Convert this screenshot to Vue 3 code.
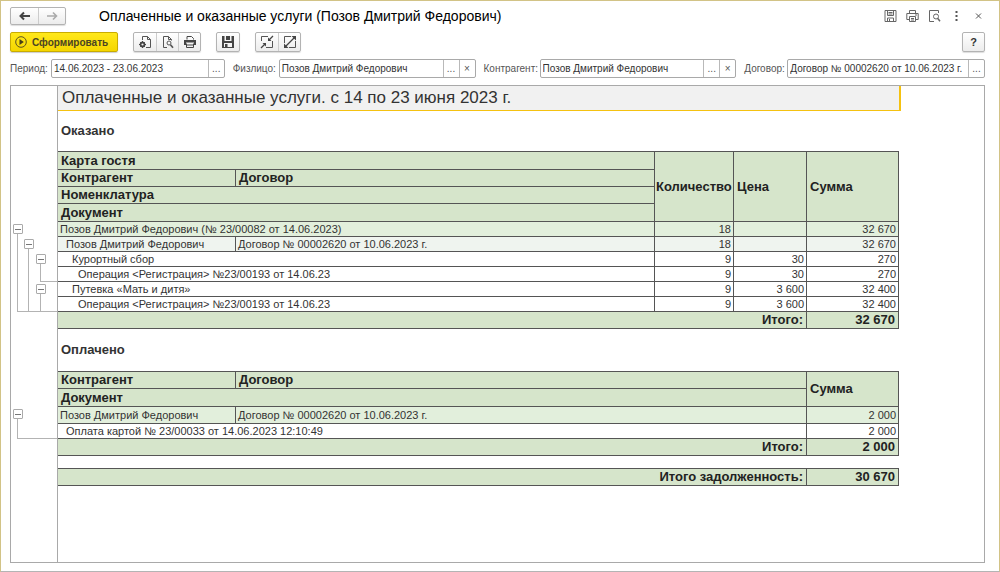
<script setup>
const filters = [
  { id: 'period', label: 'Период:', value: '14.06.2023 - 23.06.2023', clear: false },
  { id: 'person', label: 'Физлицо:', value: 'Позов Дмитрий Федорович', clear: true },
  { id: 'partner', label: 'Контрагент:', value: 'Позов Дмитрий Федорович', clear: true },
  { id: 'contract', label: 'Договор:', value: 'Договор № 00002620 от 10.06.2023 г.', clear: false },
]
const operations = [
  { name: 'Курортный сбор', level: 2, qty: '9', price: '30', sum: '270' },
  { name: 'Операция <Регистрация> №23/00193 от 14.06.23', level: 3, qty: '9', price: '30', sum: '270' },
  { name: 'Путевка «Мать и дитя»', level: 2, qty: '9', price: '3 600', sum: '32 400' },
  { name: 'Операция <Регистрация> №23/00193 от 14.06.23', level: 3, qty: '9', price: '3 600', sum: '32 400' },
]
const groups = ['g1', 'g2', 'g3', 'g4']
</script>

<template>
  <main class="window">
    <header class="titlebar">
      <div class="group nav">
        <button type="button" aria-label="Назад">
          <svg width="12" height="10" viewBox="0 0 12 10"><path d="M11 5H2M5 1.5L1.5 5L5 8.5" fill="none" stroke="#444" stroke-width="2" /></svg>
        </button>
        <button type="button" aria-label="Вперед">
          <svg width="12" height="10" viewBox="0 0 12 10"><path d="M1 5H10M7 1.5L10.500 5L7 8.500" fill="none" stroke="#aaa" stroke-width="1.600" /></svg>
        </button>
      </div>
      <h1>Оплаченные и оказанные услуги (Позов Дмитрий Федорович)</h1>
      <div class="window-actions">
        <button type="button" aria-label="Сохранить">
          <svg width="13" height="12" viewBox="0 0 13 12" fill="none" stroke="#666"><path d="M1 .5H12V11.500H1Z" /><path d="M3.500 1V5.500H9.500V1M4.500 2.500H8.500M4.500 4H8.500" /><path d="M3.500 11.500V8H9.500V11.500M5.500 9V11" /></svg>
        </button>
        <button type="button" aria-label="Печать">
          <svg width="13" height="12" viewBox="0 0 13 12" fill="none" stroke="#666"><path d="M3.500 3.500V.5H9.500V3.500M3 9.500H.8V3.500H12.200V9.500H10" /><path d="M3.500 6.500H9.500V11.500H3.500ZM5 8.500H8M5 10H8M9 5H11" /></svg>
        </button>
        <button type="button" aria-label="Просмотр">
          <svg width="13" height="12" viewBox="0 0 13 12" fill="none" stroke="#666"><path d="M6 11.500H1.500V.5H10.500V3" /><circle cx="8" cy="6.500" r="2.500" /><path d="M9.800 8.500L12 11.200" stroke-width="1.500" /></svg>
        </button>
        <button type="button" aria-label="Меню">
          <svg width="13" height="12" viewBox="0 0 13 12" fill="#555"><rect x="5.500" y="1" width="2" height="2" /><rect x="5.500" y="5" width="2" height="2" /><rect x="5.500" y="9" width="2" height="2" /></svg>
        </button>
        <button type="button" aria-label="Закрыть">
          <svg width="13" height="12" viewBox="0 0 13 12" fill="none" stroke="#555"><path d="M4 3.500L9 8.500M9 3.500L4 8.500" /></svg>
        </button>
      </div>
    </header>

    <div class="toolbar">
      <button type="button" class="primary">
        <svg width="12" height="12" viewBox="0 0 12 12"><circle cx="6" cy="6" r="5.300" fill="none" stroke="#5c5320" /><path d="M4.500 3L8.800 6L4.500 9Z" fill="#443d18" /></svg>
        <span>Сформировать</span>
      </button>
      <div class="group">
        <button type="button" aria-label="Настройки">
          <svg width="14" height="14" viewBox="0 0 14 14" fill="none" stroke="#555"><path d="M4.500 5V1.500H9.500L12.500 4.500V12.500H8M9.500 1.500V4.500H12.500" /><circle cx="4.500" cy="9.500" r="2" stroke="#444" stroke-width="1.800" /><path d="M4.500 6V7M4.500 12V13M1 9.500H2M7 9.500H8M2 7L2.800 7.800M7 12L6.200 11.200M7 7L6.200 7.800M2 12L2.800 11.200" stroke="#444" /></svg>
        </button>
        <button type="button" aria-label="Предварительный просмотр">
          <svg width="14" height="14" viewBox="0 0 14 14" fill="none" stroke="#555"><path d="M6 12.500H2.500V1.500H7.500L10.500 4.500V5.500M7.500 1.500V4.500H10.500" /><circle cx="8" cy="8" r="2" /><path d="M9.500 9.800L12 12.800" stroke-width="1.700" /></svg>
        </button>
        <button type="button" aria-label="Печать отчета">
          <svg width="14" height="14" viewBox="0 0 14 14" fill="none" stroke="#444"><path d="M4 4.500V1.500H8.500L10.500 3.500V4.500" /><path d="M1 5H13V10H11V7.500H3V10H1Z" fill="#444" stroke="none" /><path d="M3.500 8.500V12.500H10.500V8.500M3 10H11" /></svg>
        </button>
      </div>
      <div class="group">
        <button type="button" aria-label="Записать">
          <svg width="14" height="14" viewBox="0 0 14 14"><path d="M1 1H13V13H1Z" fill="#444" /><path d="M3.500 1H10.500V6H3.500ZM3 8H11V12H3Z" fill="#f4f4f4" /><path d="M5 1H9V5H5ZM4 9H6.500V12H4Z" fill="#444" /></svg>
        </button>
      </div>
      <div class="group">
        <button type="button" aria-label="Свернуть группы">
          <svg width="14" height="14" viewBox="0 0 14 14" fill="none" stroke="#555"><path d="M1.500 6V1.500H8M12.500 6V12.500H6" /><path d="M13 1L9 5M1 13L5 9" stroke="#444" stroke-width="1.300" /><path d="M8 2.500V6H11.500ZM6 11.500V8H2.500Z" fill="#444" stroke="none" /></svg>
        </button>
        <button type="button" aria-label="Развернуть группы">
          <svg width="14" height="14" viewBox="0 0 14 14" fill="none" stroke="#555"><path d="M1.500 8V1.500H8M12.500 6V12.500H6" /><path d="M3 11L11 3" stroke="#444" stroke-width="1.300" /><path d="M8.500 1H13V5.500ZM1 8.500V13H5.500Z" fill="#444" stroke="none" /></svg>
        </button>
      </div>
      <button type="button" class="help">?</button>
    </div>

    <form class="filters" @submit.prevent>
      <template v-for="f in filters" :key="f.id">
        <label :for="f.id">{{ f.label }}</label>
        <div class="field">
          <input :id="f.id" type="text" :value="f.value" />
          <button type="button" aria-label="Выбрать">...</button>
          <button v-if="f.clear" type="button" aria-label="Очистить">×</button>
        </div>
      </template>
    </form>

    <div class="sheet">
      <div class="band">
        <div class="gutter"></div>
        <h2 class="report-title">Оплаченные и оказанные услуги. с 14 по 23 июня 2023 г.</h2>
      </div>

      <div class="band">
        <div class="gutter"></div>
        <h3>Оказано</h3>
      </div>

      <div class="band">
        <div class="gutter tree services">
          <div v-for="g in groups" :key="g" class="node" :class="g">
            <button type="button" aria-label="Свернуть группу"></button>
            <span class="stem"></span>
          </div>
        </div>
        <table>
          <colgroup><col class="c1" /><col class="c2" /><col class="c3" /><col class="c4" /><col class="c5" /></colgroup>
          <thead>
            <tr class="tall">
              <th colspan="2">Карта гостя</th>
              <th rowspan="4" class="snug">Количество</th>
              <th rowspan="4">Цена</th>
              <th rowspan="4">Сумма</th>
            </tr>
            <tr><th>Контрагент</th><th>Договор</th></tr>
            <tr><th colspan="2">Номенклатура</th></tr>
            <tr class="tall"><th colspan="2">Документ</th></tr>
          </thead>
          <tbody>
            <tr class="level-a">
              <td colspan="2">Позов Дмитрий Федорович (№ 23/00082 от 14.06.2023)</td>
              <td class="num">18</td><td></td><td class="num">32 670</td>
            </tr>
            <tr class="level-b">
              <td class="indent-1">Позов Дмитрий Федорович</td>
              <td>Договор № 00002620 от 10.06.2023 г.</td>
              <td class="num">18</td><td></td><td class="num">32 670</td>
            </tr>
            <tr v-for="(o, i) in operations" :key="i">
              <td colspan="2" :class="'indent-' + o.level">{{ o.name }}</td>
              <td class="num">{{ o.qty }}</td><td class="num">{{ o.price }}</td><td class="num">{{ o.sum }}</td>
            </tr>
          </tbody>
          <tfoot>
            <tr><th colspan="4" class="num">Итого:</th><td class="num">32 670</td></tr>
          </tfoot>
        </table>
      </div>

      <div class="band">
        <div class="gutter"></div>
        <h3 class="second">Оплачено</h3>
      </div>

      <div class="band">
        <div class="gutter tree payments">
          <div class="node">
            <button type="button" aria-label="Свернуть группу"></button>
            <span class="stem"></span>
          </div>
        </div>
        <table>
          <colgroup><col class="c1" /><col class="c2" /><col class="c3" /><col class="c4" /><col class="c5" /></colgroup>
          <thead>
            <tr><th>Контрагент</th><th colspan="3">Договор</th><th rowspan="2">Сумма</th></tr>
            <tr class="tall"><th colspan="4">Документ</th></tr>
          </thead>
          <tbody>
            <tr class="level-a roomy">
              <td>Позов Дмитрий Федорович</td>
              <td colspan="3">Договор № 00002620 от 10.06.2023 г.</td>
              <td class="num">2 000</td>
            </tr>
            <tr>
              <td colspan="4" class="indent-1">Оплата картой № 23/00033 от 14.06.2023 12:10:49</td>
              <td class="num">2 000</td>
            </tr>
          </tbody>
          <tfoot>
            <tr><th colspan="4" class="num">Итого:</th><td class="num">2 000</td></tr>
          </tfoot>
        </table>
      </div>

      <div class="band">
        <div class="gutter"></div>
        <table class="debt">
          <colgroup><col class="c1" /><col class="c2" /><col class="c3" /><col class="c4" /><col class="c5" /></colgroup>
          <tfoot>
            <tr><th colspan="4" class="num">Итого задолженность:</th><td class="num">30 670</td></tr>
          </tfoot>
        </table>
      </div>

      <div class="band rest"><div class="gutter"></div></div>
    </div>
  </main>
</template>

<style>
body {
  margin: 0;
  background: #fff;
}
</style>

<style scoped>
* {
  box-sizing: border-box;
}
.window {
  display: flex;
  flex-direction: column;
  min-height: 100vh;
  padding: 6px 14px 8px 9px;
  border: 1px solid #d2c386;
  border-bottom-color: #b4b4b4;
  font-family: "Liberation Sans", Arial, sans-serif;
  font-size: 11px;
  color: #333;
}
button {
  padding: 0;
  margin: 0;
  border: 0;
  background: none;
  font: inherit;
  color: inherit;
}
h1, h2, h3 {
  margin: 0;
}
svg {
  display: block;
}
.titlebar {
  display: flex;
  align-items: center;
  height: 18px;
}
.titlebar h1 {
  margin-left: 33px;
  font-size: 14px;
  font-weight: 400;
  line-height: 18px;
  color: #000;
  white-space: nowrap;
}
.window-actions {
  display: flex;
  gap: 9px;
  margin-left: auto;
}
.group {
  display: flex;
  border: 1px solid #b3b3b3;
  border-radius: 2px;
  background: linear-gradient(#fff, #ececec);
  box-shadow: 0 1px 1px #ddd;
}
.group button {
  display: flex;
  align-items: center;
  justify-content: center;
  width: 22px;
}
.group button + button {
  border-left: 1px solid #ccc;
}
.nav {
  height: 18px;
}
.group.nav button {
  width: 27px;
}
.toolbar {
  display: flex;
  gap: 15px;
  height: 20px;
  margin-top: 7px;
}
.primary {
  display: flex;
  align-items: center;
  gap: 5px;
  padding: 0 9px 0 4px;
  border: 1px solid #c9ac00;
  border-radius: 2px;
  background: linear-gradient(#ffe81a, #f5d600);
  box-shadow: 0 1px 1px #ccc;
  font-size: 10px;
  font-weight: 700;
  color: #4a4423;
}
.help {
  width: 23px;
  margin-left: auto;
  border: 1px solid #b3b3b3;
  border-radius: 2px;
  background: linear-gradient(#fff, #ececec);
  box-shadow: 0 1px 1px #ddd;
  font-weight: 700;
}
.filters {
  display: grid;
  grid-template-columns: 41px 174fr 54px 197fr 64px 197fr 51px 198fr;
  height: 19px;
  margin-top: 7px;
  font-size: 10px;
}
.filters label {
  padding-left: 8px;
  line-height: 19px;
  color: #555;
  white-space: nowrap;
}
.filters label:first-child {
  padding-left: 0;
}
.field {
  display: flex;
  min-width: 0;
  border: 1px solid #a9a9a9;
  border-radius: 2px;
}
.field input {
  flex: 1;
  min-width: 0;
  padding: 0 0 0 2px;
  border: 0;
  outline: 0;
  background: none;
  font: inherit;
  color: #333;
}
.field button {
  width: 16px;
  border-left: 1px solid #b9b9b9;
  color: #555;
}
.sheet {
  display: flex;
  flex: 1;
  flex-direction: column;
  margin-top: 7px;
  border: 1px solid #a9a9a9;
}
.band {
  display: flex;
}
.rest {
  flex: 1;
}
.gutter {
  flex: none;
  width: 47px;
  border-right: 1px solid #a9a9a9;
}
.report-title {
  width: 843px;
  height: 25px;
  padding-left: 4px;
  border: solid #f5c211;
  border-width: 0 2px 1px 0;
  background: #f1f1f1;
  font-size: 17px;
  font-weight: 400;
  line-height: 23px;
}
h3 {
  padding-left: 3px;
  font-size: 13px;
  line-height: 40px;
}
.second {
  line-height: 42px;
}
table {
  width: 841px;
  table-layout: fixed;
  border-spacing: 0;
  border-top: 1px solid #555;
}
.c1 { width: 178px; }
.c2 { width: 419px; }
.c3 { width: 79px; }
.c4 { width: 73px; }
.c5 { width: 92px; }
th,
td {
  height: 15px;
  padding: 0 2px;
  border: solid #555;
  border-width: 0 1px 1px 0;
  line-height: 14px;
  text-align: left;
  white-space: nowrap;
}
th,
tfoot td {
  height: 17px;
  padding: 0 3px;
  background: #d6e5cb;
  font-size: 13px;
  font-weight: 700;
  color: #222;
}
.tall th {
  height: 18px;
}
.tall .snug {
  padding: 0 1px;
}
.roomy td {
  height: 17px;
}
.num {
  text-align: right;
}
.level-a td { background: #e2efdc; }
.level-b td { background: #eff4ef; }
.indent-1 { padding-left: 8px; }
.indent-2 { padding-left: 14px; }
.indent-3 { padding-left: 20px; }
.debt {
  margin-top: 12px;
}
.tree {
  display: grid;
  grid-template-columns: 11px 12px 1fr;
  padding-left: 2px;
}
.services {
  grid-template-rows: 71px repeat(6, 15px) 17px;
}
.payments {
  grid-template-rows: 36px 17px 15px 17px;
}
.node {
  display: flex;
  flex-direction: column;
  padding-top: 2px;
}
.node button {
  width: 10px;
  height: 10px;
  flex: none;
  border: 1px solid #aaa;
  border-radius: 1px;
  background: linear-gradient(#777, #777) center / 6px 1px no-repeat;
}
.stem {
  flex: 1;
  margin-left: 4px;
  border: solid #b3b3b3;
  border-width: 0 0 1px 1px;
}
.g1 { grid-area: 2 / 1 / 8 / 4; }
.g2 { grid-area: 3 / 2 / 8 / 4; }
.g3 { grid-area: 4 / 3 / 6 / 4; }
.g4 { grid-area: 6 / 3 / 8 / 4; }
.payments .node { grid-area: 2 / 1 / 4 / 4; }
</style>
